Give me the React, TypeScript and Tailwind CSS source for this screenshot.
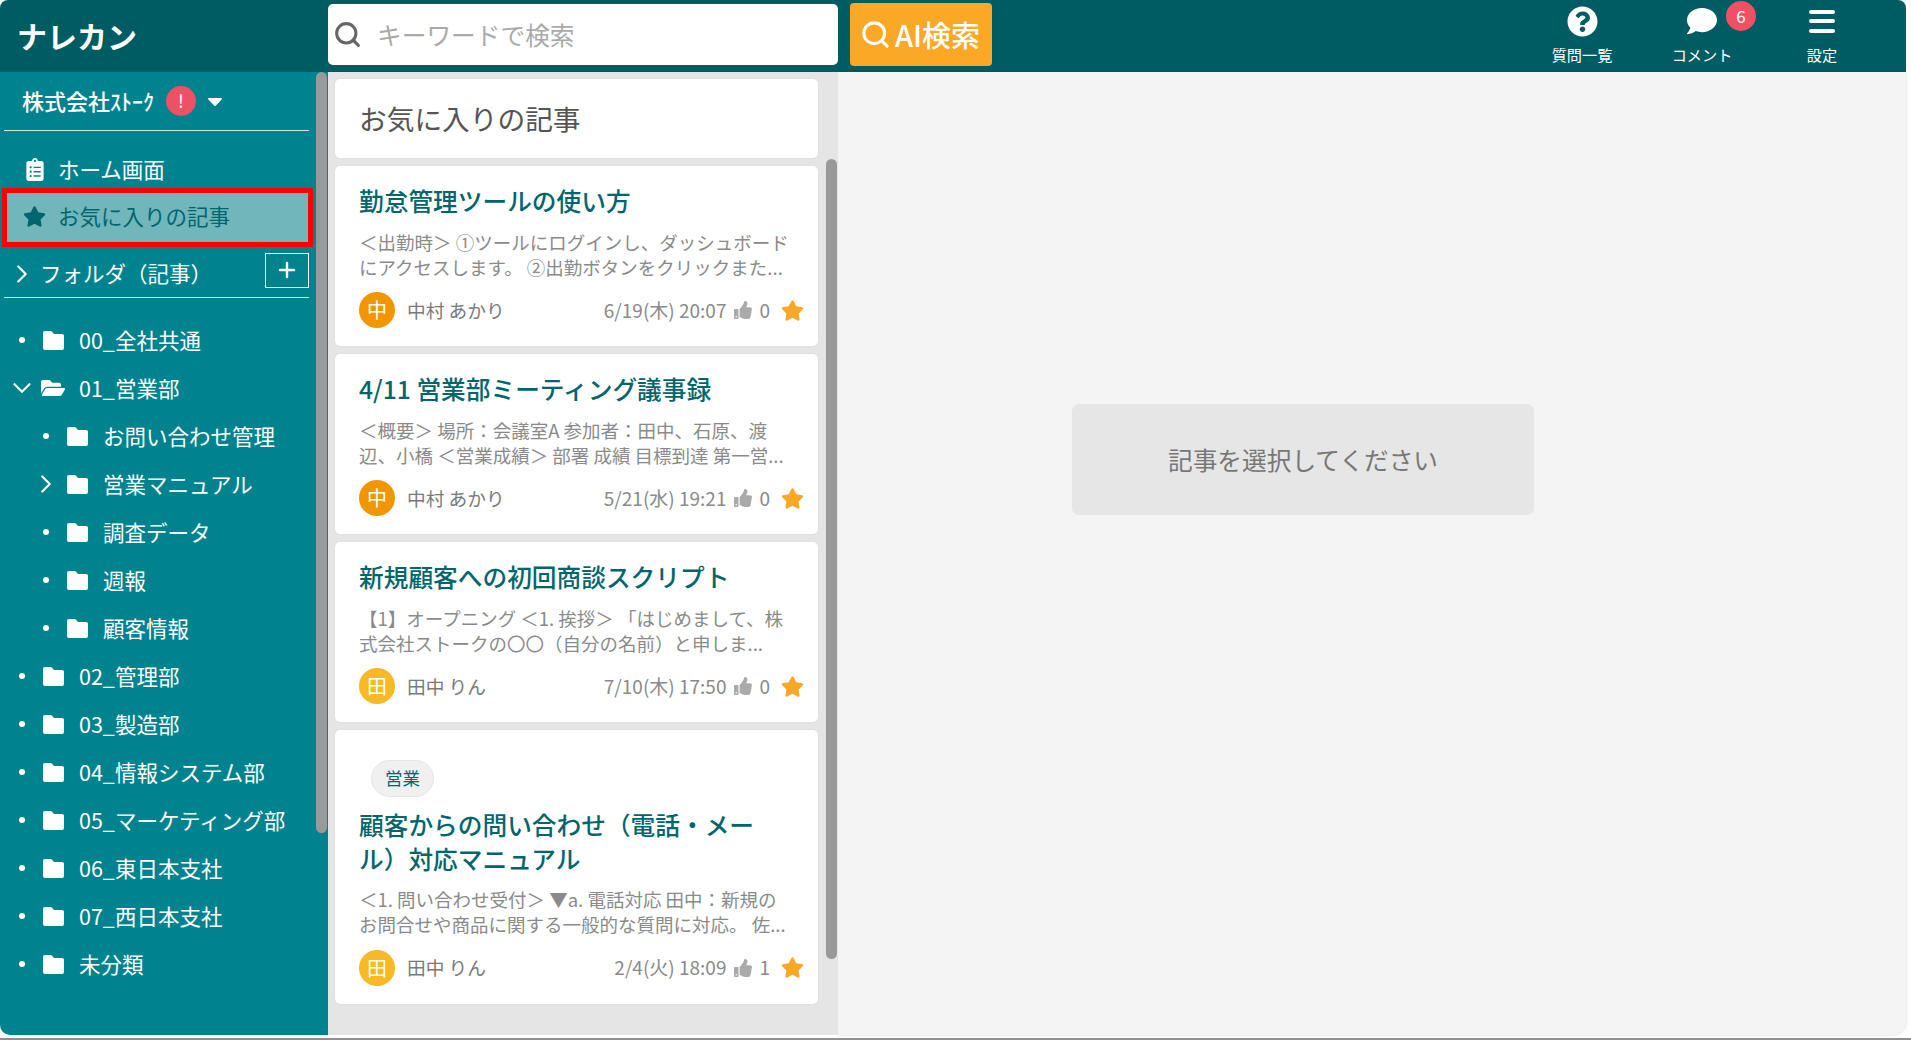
import React from "react";
import { FaClipboardList, FaStar, FaFolderOpen, FaQuestionCircle, FaComment, FaThumbsUp, FaCaretDown } from "react-icons/fa";
import { ChevronRight, ChevronDown, Plus, Search } from "lucide-react";

const font = { fontFamily: '"Noto Sans CJK JP", "Noto Sans", sans-serif' };

function Folder() {
  return (
    <svg width="21" height="19" viewBox="0 0 21 19" fill="white" className="shrink-0">
      <path d="M2 0h6.2l2.8 3h8a2 2 0 0 1 2 2v12a2 2 0 0 1-2 2H2a2 2 0 0 1-2-2V2a2 2 0 0 1 2-2z" />
    </svg>
  );
}

function TreeRow({ label, level = 0, state = "leaf" }: { label: string; level?: number; state?: "leaf" | "closed" | "open" }) {
  return (
    <div className={`flex items-center h-[48px] ${level === 1 ? "pl-[24px]" : ""}`}>
      <div className="w-[43px] h-full flex items-center justify-start relative shrink-0">
        {state === "leaf" && <span className="ml-[19px] w-[6px] h-[6px] rounded-full bg-white" />}
        {state === "closed" && <ChevronRight size={30} strokeWidth={1.7} color="white" className="ml-[7px]" />}
        {state === "open" && <ChevronDown size={30} strokeWidth={1.7} color="white" className="ml-[7px]" />}
      </div>
      <div className="w-[36px] shrink-0 flex items-center">
        {state === "open" ? <FaFolderOpen size={24} color="white" className="-ml-[2px]" /> : <Folder />}
      </div>
      <span className="text-[21.5px] text-white whitespace-nowrap">{label}</span>
    </div>
  );
}

function Sidebar() {
  return (
    <div className="relative w-[328px] shrink-0 bg-[#00838f] rounded-bl-[10px] overflow-hidden">
      <div className="mx-[4px] w-[305px] h-[59px] border-b border-[#cfe6e8] flex items-center pl-[18px] pb-[1px]">
        <span className="text-[22px] font-medium text-white whitespace-nowrap">株式会社ｽﾄｰｸ</span>
        <span className="ml-[12px] w-[30px] h-[30px] rounded-full bg-[#ef5064] text-white text-[18px] flex items-center justify-center">!</span>
        <FaCaretDown size={24} color="white" className="ml-[7px]" />
      </div>
      <div className="h-[15px]" />
      <div className="h-[47px] flex items-center pl-[26px]">
        <FaClipboardList size={23} color="white" className="w-[18px]" />
        <span className="ml-[14px] text-[21.5px] text-white">ホーム画面</span>
      </div>
      <div className="ml-[7px] w-[301px] h-[49px] bg-[#70b6bb] outline-[5px] outline-[#ff0000] flex items-center pl-[16px] pb-[2px]">
        <FaStar size={23} color="#00666e" />
        <span className="ml-[12px] text-[21.5px] text-[#00666e]">お気に入りの記事</span>
      </div>
      <div className="mx-[4px] w-[305px] mt-[8px] h-[48px] border-b border-[#cfe6e8] flex items-center">
        <ChevronRight size={30} strokeWidth={1.7} color="white" className="ml-[3px]" />
        <span className="ml-[3px] text-[21.5px] text-white">フォルダ（記事）</span>
        <span className="ml-auto mb-[7px] w-[44px] h-[35px] border border-white flex items-center justify-center">
          <Plus size={24} strokeWidth={2.4} color="white" />
        </span>
      </div>
      <div className="pt-[18px]">
        <TreeRow label="00_全社共通" />
        <TreeRow label="01_営業部" state="open" />
        <TreeRow label="お問い合わせ管理" level={1} />
        <TreeRow label="営業マニュアル" level={1} state="closed" />
        <TreeRow label="調査データ" level={1} />
        <TreeRow label="週報" level={1} />
        <TreeRow label="顧客情報" level={1} />
        <TreeRow label="02_管理部" />
        <TreeRow label="03_製造部" />
        <TreeRow label="04_情報システム部" />
        <TreeRow label="05_マーケティング部" />
        <TreeRow label="06_東日本支社" />
        <TreeRow label="07_西日本支社" />
        <TreeRow label="未分類" />
      </div>
      <div className="absolute left-[316px] top-0 w-[11px] h-[761px] rounded-full bg-[#999999]" />
    </div>
  );
}

type Card = { title: string; desc: string; avatar: string; avatarColor: string; name: string; date: string; likes: string; tag?: string };

function ArticleCard({ c }: { c: Card }) {
  return (
    <div className={`bg-white rounded-[5px] pl-[24px] pr-[14px] pb-[18px] shadow-[0_0_2px_rgba(0,0,0,0.08)] ${c.tag ? "pt-[30px]" : "pt-[18px]"}`}>
      {c.tag && (
        <div className="ml-[12px] mb-[11px] w-[63px] h-[37px] rounded-full bg-[#f0f0f0] border border-[#e6e6e6] flex items-center justify-center text-[17.5px] text-[#00666e]">
          {c.tag}
        </div>
      )}
      <div className="text-[24.7px] leading-[33.5px] text-[#00666e] font-medium w-[425px]">{c.title}</div>
      <div className="mt-[12px] text-[18.5px] leading-[25px] text-[#8a8a8a] w-[431px] h-[50px]">{c.desc}</div>
      <div className="mt-[12.5px] flex items-center h-[36px]">
        <span className={`w-[36px] h-[36px] rounded-full flex items-center justify-center text-white text-[20px] ${c.avatarColor}`}>{c.avatar}</span>
        <span className="ml-[12px] text-[18.7px] text-[#7a7a7a]">{c.name}</span>
        <span className="ml-auto text-[19px] text-[#8a8a8a]">{c.date}</span>
        <FaThumbsUp size={18} color="#aaaaaa" className="ml-[8px]" />
        <span className="ml-[7px] text-[19px] text-[#8a8a8a]">{c.likes}</span>
        <FaStar size={23} color="#f9a825" className="ml-[11px]" />
      </div>
    </div>
  );
}

const cards: Card[] = [
  { title: "勤怠管理ツールの使い方", desc: "＜出勤時＞ ①ツールにログインし、ダッシュボードにアクセスします。 ②出勤ボタンをクリックまた...", avatar: "中", avatarColor: "bg-[#f29600]", name: "中村 あかり", date: "6/19(木) 20:07", likes: "0" },
  { title: "4/11 営業部ミーティング議事録", desc: "＜概要＞ 場所：会議室A 参加者：田中、石原、渡辺、小橋 ＜営業成績＞ 部署 成績 目標到達 第一営...", avatar: "中", avatarColor: "bg-[#f29600]", name: "中村 あかり", date: "5/21(水) 19:21", likes: "0" },
  { title: "新規顧客への初回商談スクリプト", desc: "【1】オープニング ＜1. 挨拶＞ 「はじめまして、株式会社ストークの〇〇（自分の名前）と申しま...", avatar: "田", avatarColor: "bg-[#f7b924]", name: "田中 りん", date: "7/10(木) 17:50", likes: "0" },
  { title: "顧客からの問い合わせ（電話・メール）対応マニュアル", desc: "＜1. 問い合わせ受付＞ ▼a. 電話対応 田中：新規のお問合せや商品に関する一般的な質問に対応。 佐...", avatar: "田", avatarColor: "bg-[#f7b924]", name: "田中 りん", date: "2/4(火) 18:09", likes: "1", tag: "営業" },
];

function ListPanel() {
  return (
    <div className="relative w-[510px] shrink-0 bg-[#e5e5e5] pl-[7px] pr-[20px] pt-[7px] flex flex-col gap-[8px]">
      <div className="h-[79px] bg-white rounded-[5px] flex items-center pl-[24px] text-[27.7px] text-[#555555] shadow-[0_0_2px_rgba(0,0,0,0.08)]">
        お気に入りの記事
      </div>
      {cards.map((c) => (
        <ArticleCard key={c.title} c={c} />
      ))}
      <div className="absolute left-[498px] top-[87px] w-[11px] h-[800px] rounded-full bg-[#999999]" />
    </div>
  );
}

function Header() {
  return (
    <div className="h-[72px] shrink-0 bg-[#005c63] rounded-t-[8px] flex items-center">
      <div className="w-[328px] shrink-0 pl-[17px] pb-[3px] text-[30px] font-bold text-white leading-none">ナレカン</div>
      <div className="w-[510px] h-[61px] mb-[3px] bg-white rounded-[5px] flex items-center pl-[5px]">
        <Search size={29} strokeWidth={2.5} color="#666666" />
        <span className="ml-[15px] text-[24.7px] text-[#aaaaaa]">キーワードで検索</span>
      </div>
      <div className="ml-[12px] w-[142px] h-[63px] bg-[#faa825] rounded-[4px] flex items-center pl-[10px] mb-[3px] text-white">
        <Search size={31} strokeWidth={2.4} color="white" />
        <span className="ml-[4px] text-[29px] font-medium">AI検索</span>
      </div>
      <div className="ml-auto pr-[24px] flex">
        <NavItem label="質問一覧"><FaQuestionCircle size={31} color="white" /></NavItem>
        <NavItem label="コメント">
          <FaComment size={30} color="white" />
          <span className="absolute left-[84px] top-[1px] w-[30px] h-[30px] rounded-full bg-[#ef5064] text-white text-[17px] flex items-center justify-center">6</span>
        </NavItem>
        <NavItem label="設定">
          <span className="w-[26px] flex flex-col gap-[5.5px]">
            <span className="h-[4px] rounded-full bg-white" />
            <span className="h-[4px] rounded-full bg-white" />
            <span className="h-[4px] rounded-full bg-white" />
          </span>
        </NavItem>
      </div>
    </div>
  );
}

function NavItem({ label, children }: { label: string; children: React.ReactNode }) {
  return (
    <div className="relative w-[120px] h-[72px] flex flex-col items-center">
      <div className="h-[44px] pb-[2px] flex items-center justify-center">{children}</div>
      <span className="text-[15.2px] leading-[20px] text-white">{label}</span>
    </div>
  );
}

export default function App() {
  return (
    <div className="w-full h-[1040px] bg-white overflow-hidden flex flex-col" style={font}>
      <div className="w-[1906px] h-[1035px] flex flex-col">
        <Header />
        <div className="flex-1 flex min-h-0">
          <Sidebar />
          <ListPanel />
          <div className="flex-1 bg-[#f4f4f4] rounded-br-[14px] shadow-[0_0_3px_rgba(0,0,0,0.18)] pl-[234px] pt-[332px]">
            <div className="w-[462px] h-[111px] bg-[#e6e6e6] rounded-[7px] flex items-center justify-center text-[24.7px] text-[#777777]">
              記事を選択してください
            </div>
          </div>
        </div>
      </div>
      <div className="mt-[3px] h-[2px] bg-[#8f8f8f]" />
    </div>
  );
}
